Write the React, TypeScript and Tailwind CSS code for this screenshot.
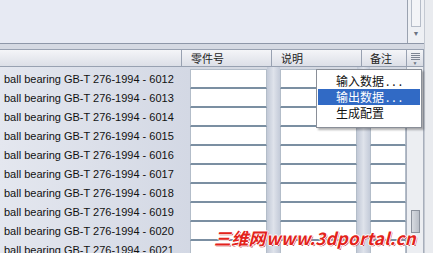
const rows = ['6012', '6013', '6014', '6015', '6016', '6017', '6018', '6019', '6020', '6021'];

function Cell({ w }: { w: string }) {
  return <div className={`${w} h-full bg-white border-l border-r border-[#b3bdc9] border-b-2 border-b-[#7b8fa2]`} />;
}

function Gap({ w }: { w: string }) {
  return <div className={`${w} h-full bg-gradient-to-r from-[#c2c9d7] via-[#dfe3eb] to-[#c4cbd9]`} />;
}

function Item({ label, dots, active }: { label: string; dots?: boolean; active?: boolean }) {
  return (
    <div className={`h-[16px] leading-[16px] pl-[18px] ${active ? 'bg-[#316ac5] text-white' : ''}`}>
      {label}
      {dots && <span className="tracking-[3px] pl-[2px]">...</span>}
    </div>
  );
}

export default function App() {
  const ui = { fontFamily: '"Liberation Sans", "Noto Sans CJK SC", sans-serif' };
  const cjk = { fontFamily: '"Noto Sans CJK SC", "Liberation Sans", sans-serif' };
  return (
    <div className="relative w-[433px] h-[253px] overflow-hidden bg-[#d5d9e2] flex" style={ui}>
      <div className="w-[424px] h-full flex flex-col">
        {/* top panel */}
        <div className="h-[44px] shrink-0 flex border-b border-[#8e97a8] bg-[#e7eaf3]">
          <div className="flex-1" />
          <div className="w-[17px] h-full border-l border-[#9aa2b0] bg-[#eef0f4] flex flex-col items-center">
            <div className="w-[10px] h-[27px] border border-t-0 border-[#b5bcc8] bg-[#f3f4f7]" />
            <div className="mt-[3px] text-[7px] leading-none text-[#6b7382]">▼</div>
          </div>
        </div>
        <div className="h-[5px] shrink-0" />
        {/* table */}
        <div className="flex-1 flex min-h-0">
          <div className="w-[406px] flex flex-col">
            <div className="h-[18px] shrink-0 flex border-t border-b border-[#98a1b1] bg-gradient-to-b from-[#f4f5f8] to-[#dcdfe7] text-[11px] text-[#222]" style={cjk}>
              <div className="w-[182px] border-r border-[#98a1b1]" />
              <div className="w-[90px] border-r border-[#98a1b1] pl-[9px] leading-[16px]">零件号</div>
              <div className="w-[90px] border-r border-[#98a1b1] pl-[9px] leading-[16px]">说明</div>
              <div className="flex-1 pl-[8px] leading-[16px]">备注</div>
            </div>
            <div className="h-[3px] shrink-0 flex">
              <div className="w-[190px] bg-gradient-to-r from-[#e4e7ef] to-[#d3d8e4]" />
              <div className="w-[77px] border-b border-[#b3bdc9]" />
              <Gap w="w-[13px]" />
              <div className="w-[77px] border-b border-[#b3bdc9]" />
              <Gap w="w-[13px]" />
              <div className="flex-1 border-b border-[#b3bdc9]" />
            </div>
            {rows.map((r) => (
              <div key={r} className="h-[19px] shrink-0 flex">
                <div className="w-[190px] h-full bg-gradient-to-r from-[#e4e7ef] to-[#d3d8e4] pl-[4px] text-[11px] leading-[19px] text-[#111] whitespace-nowrap overflow-hidden">
                  ball bearing GB-T 276-1994 - {r}
                </div>
                <Cell w="w-[77px]" />
                <Gap w="w-[13px]" />
                <Cell w="w-[77px]" />
                <Gap w="w-[13px]" />
                <Cell w="flex-1" />
              </div>
            ))}
          </div>
          <div className="w-[18px] flex flex-col">
            <div className="h-[18px] shrink-0 border border-[#98a1b1] bg-gradient-to-b from-[#f4f5f8] to-[#d9dce4] flex flex-col items-center pt-[3px] gap-[1px]">
              <div className="w-[9px] h-px bg-[#7d8593]" />
              <div className="w-[9px] h-px bg-[#7d8593]" />
              <div className="w-[9px] h-px bg-[#7d8593]" />
              <div className="w-[9px] h-px bg-[#7d8593]" />
              <div className="text-[5px] leading-none text-[#6b7382]">▼</div>
            </div>
            <div className="flex-1 border-l border-r border-[#a7aebb] bg-[#eceef2] flex justify-center pt-[143px]">
              <div className="w-[9px] h-[23px] border border-[#8b919c] bg-gradient-to-r from-[#d7dae0] to-[#b9bec7]" />
            </div>
          </div>
        </div>
      </div>
      <div className="flex-1 bg-[#e9ebef] border-l border-[#c4c9d2]" />

      {/* popup menu */}
      <div className="absolute left-[316px] top-[69px] w-[106px] h-[59px] bg-white border border-[#8a8f98] shadow-[2px_2px_2px_rgba(0,0,0,0.3)] py-[3px] px-[1px] text-[12px] text-[#111]" style={cjk}>
        <Item label="输入数据" dots />
        <Item label="输出数据" dots active />
        <Item label="生成配置" />
      </div>

      {/* watermark */}
      <div
        className="absolute left-[214px] top-[229px] text-[17px] font-bold italic leading-none text-[#e3231b] whitespace-nowrap tracking-[0.3px]"
        style={{ fontFamily: '"Noto Sans CJK SC", sans-serif', textShadow: '1px 0 #fff, -1px 0 #fff, 0 1px #fff, 0 -1px #fff, 1px 1px #b01010' }}
      >
        三维网www.3dportal.cn
      </div>
    </div>
  );
}
